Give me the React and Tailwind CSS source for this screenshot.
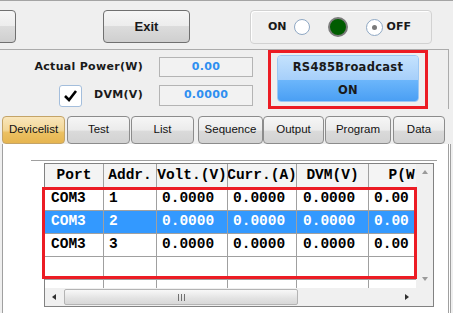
import React from 'react';

const tabs = [
  { label: 'Devicelist', cls: 'ml-[2px] w-[63px]', active: true },
  { label: 'Test', cls: 'ml-[2px] w-[63px]' },
  { label: 'List', cls: 'ml-[1px] w-[63px]' },
  { label: 'Sequence', cls: 'ml-[4px] w-[65px]' },
  { label: 'Output', cls: 'ml-0 w-[61px]' },
  { label: 'Program', cls: 'ml-[1px] w-[66px]' },
  { label: 'Data', cls: 'ml-[2px] w-[52px]' },
];

const cols = [
  { h: 'Port', w: 'w-[59px]', pad: 'pl-[6px]' },
  { h: 'Addr.', w: 'w-[53px]', pad: 'pl-[5px]' },
  { h: 'Volt.(V)', w: 'w-[71px]', pad: 'pl-[5px]' },
  { h: 'Curr.(A)', w: 'w-[69px]', pad: 'pl-[5px]' },
  { h: 'DVM(V)', w: 'w-[72px]', pad: 'pl-[6px]' },
  { h: 'P(W)', w: 'w-[75px]', pad: 'pl-[5px]' },
];

const rows = [
  ['COM3', '1', '0.0000', '0.0000', '0.0000', '0.00'],
  ['COM3', '2', '0.0000', '0.0000', '0.0000', '0.00'],
  ['COM3', '3', '0.0000', '0.0000', '0.0000', '0.00'],
  ['', '', '', '', '', ''],
  ['', '', '', '', '', ''],
];

const grayBtn =
  'border border-[#707070] rounded-[4px] bg-[linear-gradient(to_bottom,#f6f6f6_0%,#ececec_50%,#dcdcdc_50%,#cfcfcf_100%)]';

function Arrow({ dir }) {
  const d = {
    left: 'M5 1 L1 4 L5 7 Z',
    right: 'M1 1 L5 4 L1 7 Z',
    up: 'M1 5 L4 1 L7 5 Z',
    down: 'M1 2 L4 6 L7 2 Z',
  }[dir];
  return (
    <svg width="8" height="8" viewBox="0 0 8 8">
      <path d={d} fill={dir === 'left' || dir === 'right' ? '#303030' : '#9a9a9a'} />
    </svg>
  );
}

function DeviceTable() {
  return (
    <div className="relative ml-[41px] mt-[2px] w-[390px] border border-[#828282] bg-white font-['Liberation_Mono',monospace] text-[14.5px] font-bold text-black">
      <div className="flex">
        <div className="h-[124px] w-[371px] overflow-hidden">
          <div className="flex h-[24px] w-max border-b border-[#a0a0a0] bg-[#f4f4f4]">
            {cols.map((c) => (
              <div
                key={c.h}
                className={`${c.w} flex shrink-0 items-center justify-center overflow-hidden whitespace-nowrap border-r border-[#a0a0a0]`}
              >
                {c.h}
              </div>
            ))}
          </div>
          {rows.map((r, i) => (
            <div
              key={i}
              className={`flex h-[23px] w-max border-b border-[#a0a0a0] ${i === 1 ? 'bg-[#3399ff] text-white' : ''}`}
            >
              {r.map((v, j) => (
                <div
                  key={j}
                  className={`${cols[j].w} ${cols[j].pad} flex shrink-0 items-center overflow-hidden whitespace-nowrap border-r border-[#a0a0a0]`}
                >
                  {v}
                </div>
              ))}
            </div>
          ))}
        </div>
        <div className="flex h-[124px] w-[17px] flex-col items-center justify-between bg-[#f0f0f0] pb-[5px] pt-[5px]">
          <Arrow dir="up" />
          <Arrow dir="down" />
        </div>
      </div>
      <div className="flex h-[18px] bg-[#f0f0f0]">
        <div className="flex w-[19px] items-center justify-center">
          <Arrow dir="left" />
        </div>
        <div className="my-[1px] flex w-[234px] items-center justify-center rounded-[2px] border border-[#b4b4b4] bg-[linear-gradient(to_bottom,#f8f8f8,#e2e2e2_60%,#d8d8d8)]">
          <div className="flex gap-[2px]">
            <div className="h-[7px] w-px bg-[#707070]" />
            <div className="h-[7px] w-px bg-[#707070]" />
            <div className="h-[7px] w-px bg-[#707070]" />
          </div>
        </div>
        <div className="flex-1" />
        <div className="flex w-[17px] items-center justify-center">
          <Arrow dir="right" />
        </div>
        <div className="w-[17px] bg-[#f0f0f0]" />
      </div>
      <div className="pointer-events-none absolute left-[-3px] top-[23px] h-[92px] w-[375px] border-[3px] border-[#ec1c24]" />
    </div>
  );
}

export default function App() {
  return (
    <div className="h-[313px] w-[453px] overflow-hidden border-t border-[#a4a4a4] bg-[#efefef] font-['DejaVu_Sans',sans-serif] text-[#1a1a1a]">
      <div className="flex h-[48px] items-start pt-[9px]">
        <div className={`-ml-[44px] h-[33px] w-[60px] ${grayBtn}`} />
        <div
          className={`ml-[87px] flex h-[33px] w-[87px] items-center justify-center font-['Liberation_Sans',sans-serif] text-[13px] font-bold ${grayBtn}`}
        >
          Exit
        </div>
        <div className="ml-[60px] flex h-[34px] w-[182px] items-center rounded-[4px] border border-[#d2d2d2] text-[11px] font-bold shadow-[inset_1px_1px_0_#ffffff]">
          <span className="ml-[17px]">ON</span>
          <div className="ml-[7px] h-[16px] w-[16px] rounded-full border border-[#8fa8c4] bg-white" />
          <div className="ml-[18px] h-[20px] w-[20px] rounded-full border-2 border-[#7c7c7c] bg-[#005c00]" />
          <div className="ml-[18px] flex h-[17px] w-[17px] items-center justify-center rounded-full border border-[#8fa8c4] bg-white">
            <div className="h-[5px] w-[5px] rounded-full bg-[#7a7a7a]" />
          </div>
          <span className="ml-[4px]">OFF</span>
        </div>
      </div>

      <div className="flex w-[449px] border-r border-t border-[#ababab]">
        <div className="w-[268px] text-[11px] font-bold tracking-[0.3px]">
          <div className="mt-[7px] flex h-[20px] items-center">
            <div className="w-[143px] text-right">Actual Power(W)</div>
            <div className="ml-[16px] flex h-[20px] w-[94px] items-center justify-center border border-[#b4b4b4] bg-[#f2f2f2] text-[#2f8ff0]">
              0.00
            </div>
          </div>
          <div className="mt-[8px] flex h-[21px] items-center">
            <div className="flex w-[143px] items-center">
              <div className="ml-[59px] flex h-[22px] w-[23px] items-center justify-center rounded-[3px] border border-[#a4bedc] bg-white">
                <svg width="15" height="13" viewBox="0 0 15 13">
                  <path d="M2 7 L6 11 L13 2" fill="none" stroke="#000" strokeWidth="2.6" />
                </svg>
              </div>
              <span className="ml-auto">DVM(V)</span>
            </div>
            <div className="ml-[16px] flex h-[21px] w-[94px] items-center justify-center border border-[#b4b4b4] bg-[#f2f2f2] text-[#2f8ff0]">
              0.0000
            </div>
          </div>
        </div>
        <div className="h-[59px] w-[160px] border-[3px] border-[#ec1c24] pl-[6px] pt-[2px]">
          <div className="flex h-[47px] w-[142px] flex-col overflow-hidden rounded-[4px] border border-[#9cc8f4] text-[11.5px] font-bold tracking-[0.3px] shadow-[inset_0_0_0_1px_#d8ecff]">
            <div className="flex h-[24px] items-center justify-center bg-[linear-gradient(to_bottom,#c4e2fd,#a6cffa)]">
              RS485Broadcast
            </div>
            <div className="flex flex-1 items-center justify-center bg-[linear-gradient(to_bottom,#6cb6fb,#4a9ff4)]">
              ON
            </div>
          </div>
        </div>
      </div>

      <div className="mt-[7px] flex h-[28px] font-['Liberation_Sans',sans-serif] text-[11.5px] text-[#111]">
        {tabs.map((t) => (
          <div
            key={t.label}
            className={`${t.cls} flex h-[28px] items-center justify-center rounded-[4px] border ${
              t.active
                ? 'border-[#c4a468] bg-[linear-gradient(to_bottom,#f9e6bb_0%,#f3d798_50%,#ebc061_60%,#e6b550_100%)]'
                : 'border-[#8c8c8c] bg-[linear-gradient(to_bottom,#f6f6f6_0%,#ebebeb_50%,#dadada_55%,#d2d2d2_100%)]'
            }`}
          >
            {t.label}
          </div>
        ))}
      </div>

      <div className="ml-[2px] h-[200px] w-[449px] border-x border-[#a0a0a0] bg-white">
        <div className="mr-[1px] h-full border-r border-[#a0a0a0] pt-[16px]">
          <div className="ml-[28px] h-px w-[406px] bg-[#a0a0a0]" />
          <DeviceTable />
        </div>
      </div>
    </div>
  );
}
